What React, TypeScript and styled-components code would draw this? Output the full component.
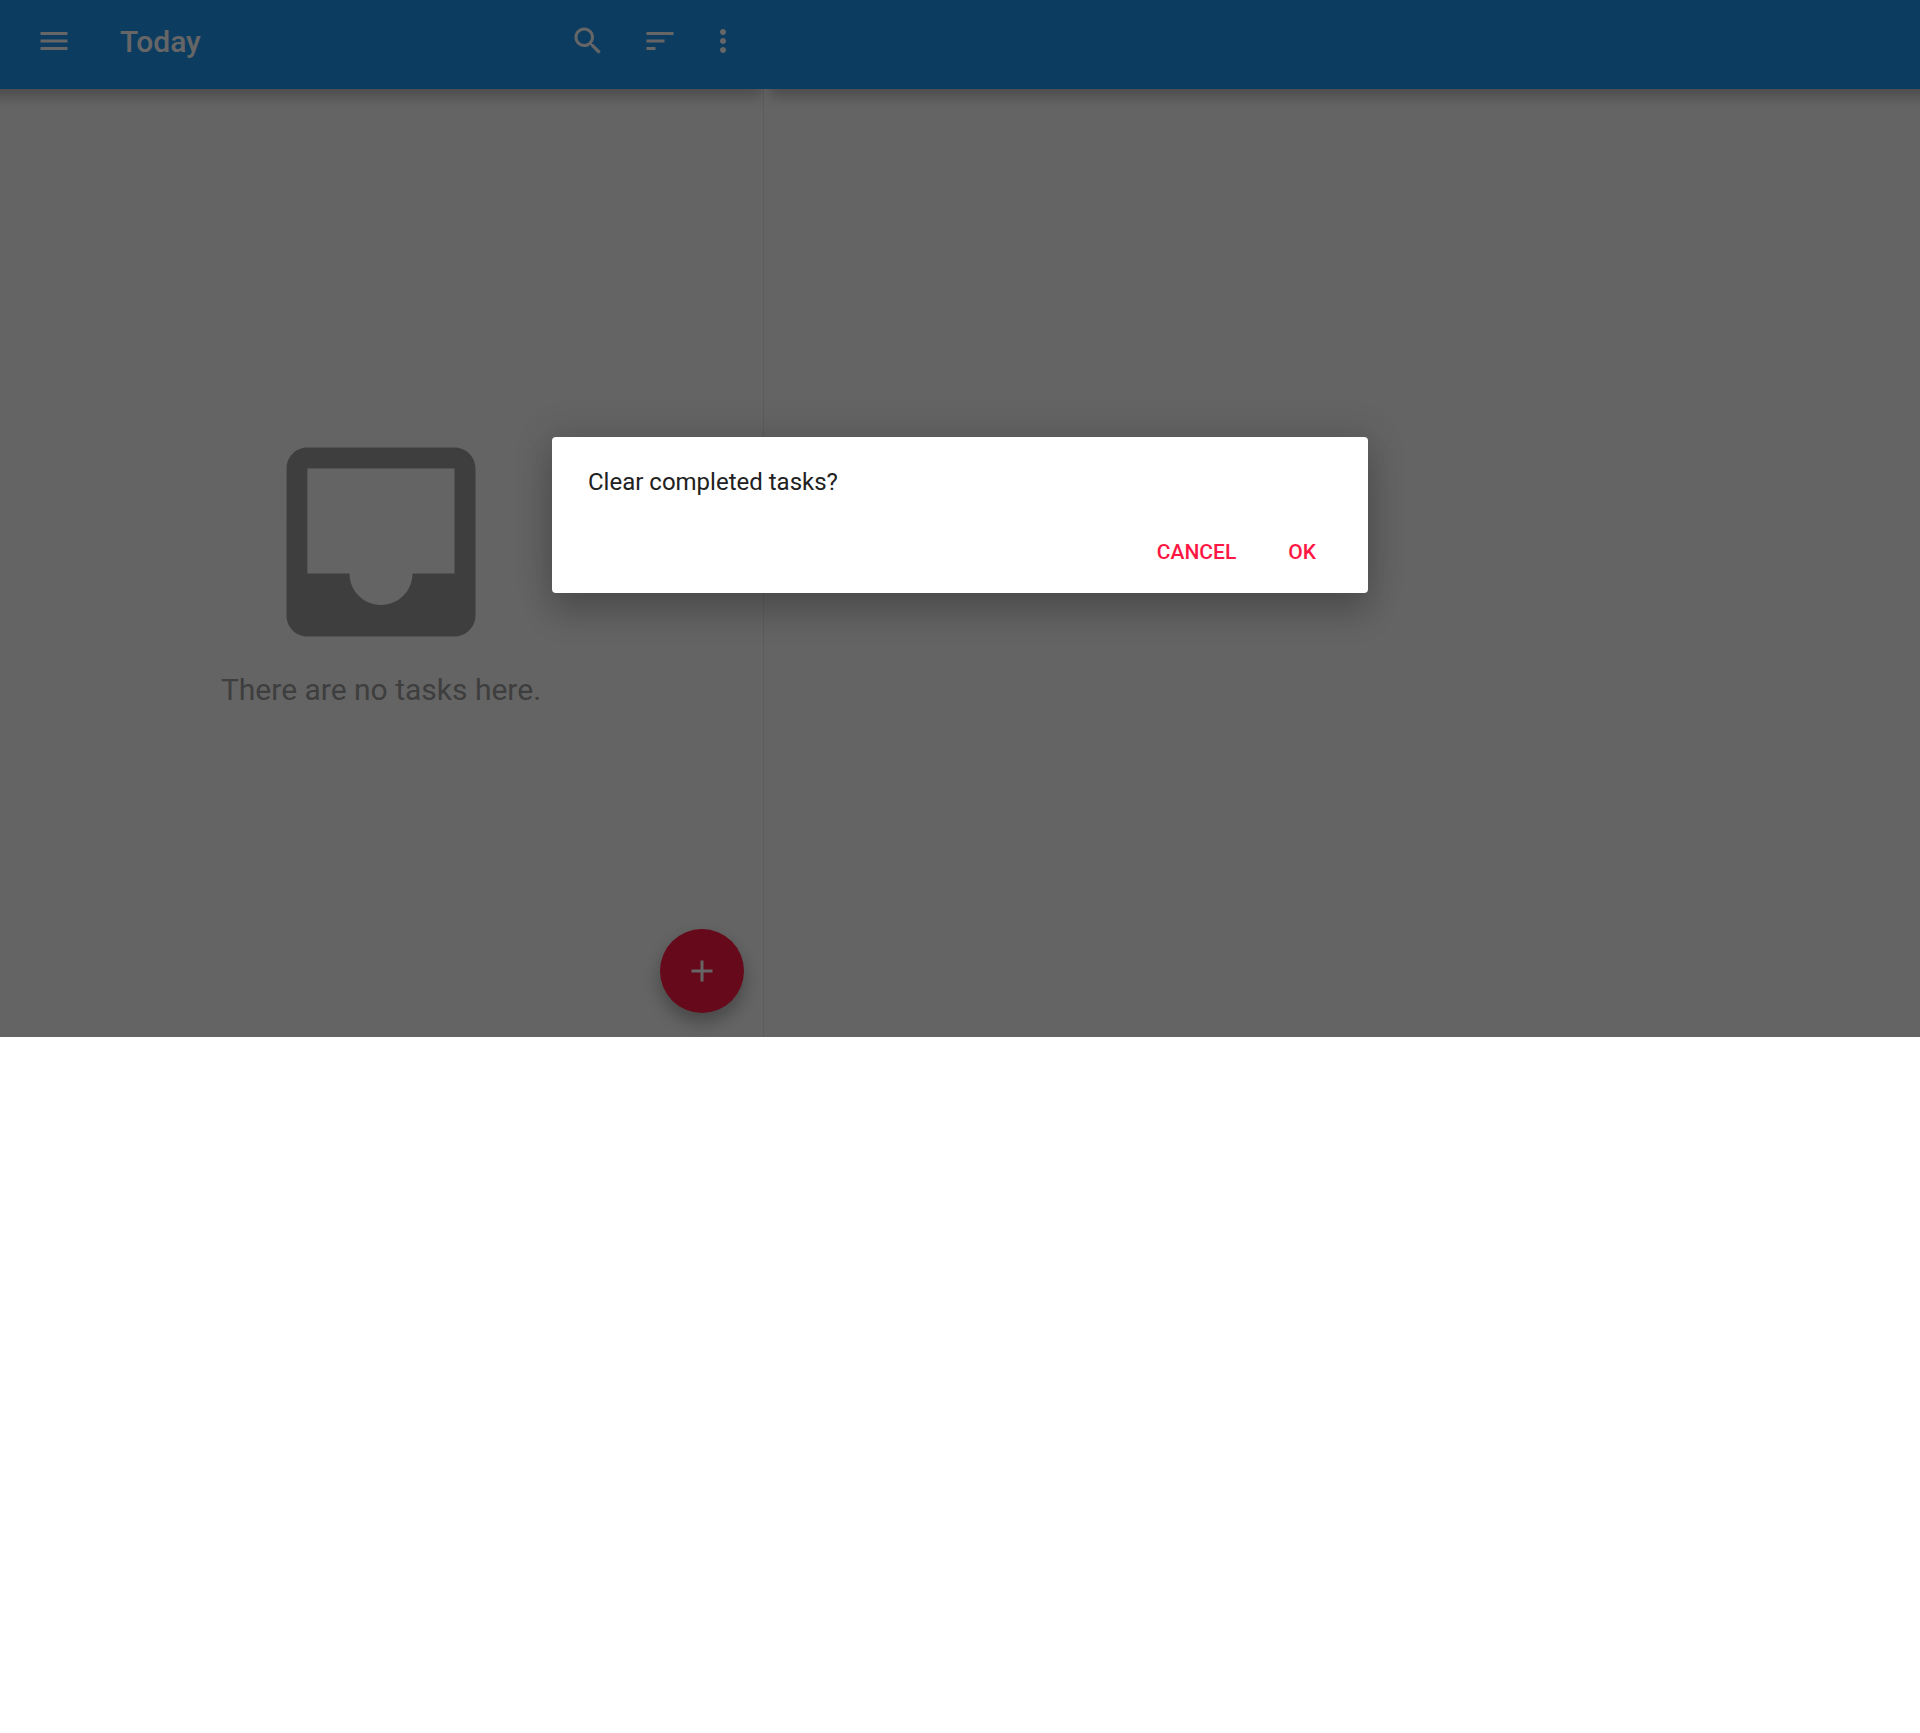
import React from "react";
import styled, { createGlobalStyle } from "styled-components";

const color = {
  primary: "#2196f3",
  accent: "#ff1744",
  surface: "#fafafa",
  muted: "#9b9b9b",
  text: "#212121",
  divider: "#e6e6e6",
};

const GlobalStyle = createGlobalStyle`
  * { box-sizing: border-box; }
  body {
    margin: 0;
    background: #ffffff;
    color: ${color.text};
    font-family: Roboto, "Noto Sans", sans-serif;
  }
`;

const Screen = styled.div`
  position: relative;
  display: grid;
  grid-template-columns: 764px 1fr;
  background: ${color.surface};
`;

const Pane = styled.section<{ $divided?: boolean }>`
  display: flex;
  flex-direction: column;
  position: relative;
  min-width: 0;
  border-right: ${(p) => (p.$divided ? `1px solid ${color.divider}` : "none")};
`;

/* The clip keeps each bar's shadow below it, so the two bars join without a seam. */
const Toolbar = styled.header<{ $side: "list" | "detail" }>`
  display: flex;
  align-items: center;
  height: 89px;
  padding: 0 14px 7px 18px;
  margin-right: ${(p) => (p.$side === "list" ? "-1px" : "0")};
  background: ${color.primary};
  color: #ffffff;
  box-shadow: ${(p) => (p.$side === "list" ? "-8px" : "12px")} 0 14px 7px rgba(0, 0, 0, 0.26);
  clip-path: inset(0 0 -24px 0);
`;

const Title = styled.h1`
  flex: 1;
  margin: 0;
  padding: 2px 0 0 30px;
  font-size: 30px;
  line-height: 36px;
  font-weight: 500;
`;

const IconButton = styled.button<{ $width?: number }>`
  display: flex;
  align-items: center;
  justify-content: center;
  width: ${(p) => p.$width ?? 72}px;
  height: 72px;
  padding: 0;
  border: 0;
  background: none;
  color: inherit;
`;

const Empty = styled.div`
  display: flex;
  flex-direction: column;
  align-items: center;
  padding: 327px 1px 327px 0;
  color: ${color.muted};
`;

const EmptyText = styled.p`
  margin: 0;
  padding-top: 2px;
  font-size: 30px;
  line-height: 40px;
`;

const Fab = styled.button`
  position: absolute;
  right: 19px;
  bottom: 24px;
  display: flex;
  align-items: center;
  justify-content: center;
  width: 84px;
  height: 84px;
  padding: 0;
  border: 0;
  border-radius: 50%;
  background: ${color.accent};
  color: #ffffff;
  box-shadow: 0 9px 18px rgba(0, 0, 0, 0.3);
`;

const Scrim = styled.div`
  position: absolute;
  inset: 0;
  display: flex;
  align-items: center;
  justify-content: center;
  padding-bottom: 7px;
  background: rgba(0, 0, 0, 0.6);
`;

const Dialog = styled.div`
  width: 816px;
  padding: 27px 40px 20px 36px;
  border-radius: 4px;
  background: #ffffff;
  box-shadow:
    0 22px 32px rgba(0, 0, 0, 0.16),
    0 0 36px 4px rgba(0, 0, 0, 0.14);
`;

const Message = styled.p`
  margin: 0;
  font-size: 24px;
  line-height: 36px;
`;

const Actions = styled.div`
  display: flex;
  justify-content: flex-end;
  gap: 28px;
  padding-top: 31px;
`;

const Action = styled.button`
  height: 42px;
  padding: 0 12px;
  border: 0;
  background: none;
  color: ${color.accent};
  font-family: inherit;
  font-size: 21px;
  line-height: 28px;
  font-weight: 500;
  text-transform: uppercase;
`;

const Svg = styled.svg`
  display: block;
  fill: currentColor;
`;

const paths = {
  menu: "M3 18h18v-2H3v2zm0-5h18v-2H3v2zm0-7v2h18V6H3z",
  search:
    "M15.5 14h-.79l-.28-.27C15.41 12.59 16 11.11 16 9.5 16 5.91 13.09 3 9.5 3S3 5.91 3 9.5 5.91 16 9.5 16c1.61 0 3.09-.59 4.23-1.57l.27.28v.79l5 4.99L20.49 19l-4.99-5zm-6 0C7.01 14 5 11.99 5 9.5S7.01 5 9.5 5 14 7.01 14 9.5 11.99 14 9.5 14z",
  sort: "M3 18h6v-2H3v2zM3 6v2h18V6H3zm0 7h12v-2H3v2z",
  more: "M12 8c1.1 0 2-.9 2-2s-.9-2-2-2-2 .9-2 2 .9 2 2 2zm0 2c-1.1 0-2 .9-2 2s.9 2 2 2 2-.9 2-2-.9-2-2-2zm0 6c-1.1 0-2 .9-2 2s.9 2 2 2 2-.9 2-2-.9-2-2-2z",
  add: "M19 13h-6v6h-2v-6H5v-2h6V5h2v6h6v2z",
  inbox:
    "M19 3H4.99c-1.11 0-1.98.89-1.98 2L3 19c0 1.1.88 2 1.99 2H19c1.1 0 2-.9 2-2V5c0-1.11-.9-2-2-2zm0 12h-4c0 1.66-1.35 3-3 3s-3-1.34-3-3H4.99V5H19v10z",
};

function Icon({ name, size = 36 }: { name: keyof typeof paths; size?: number }) {
  return (
    <Svg width={size} height={size} viewBox="0 0 24 24" aria-hidden="true">
      <path d={paths[name]} />
    </Svg>
  );
}

export default function App() {
  return (
    <>
      <GlobalStyle />
      <Screen>
        <Pane $divided>
          <Toolbar $side="list">
            <IconButton aria-label="Open menu">
              <Icon name="menu" />
            </IconButton>
            <Title>Today</Title>
            <IconButton aria-label="Search">
              <Icon name="search" />
            </IconButton>
            <IconButton aria-label="Sort">
              <Icon name="sort" />
            </IconButton>
            <IconButton aria-label="More options" $width={54}>
              <Icon name="more" />
            </IconButton>
          </Toolbar>
          <Empty>
            <Icon name="inbox" size={252} />
            <EmptyText>There are no tasks here.</EmptyText>
          </Empty>
          <Fab aria-label="Add task">
            <Icon name="add" />
          </Fab>
        </Pane>
        <Pane>
          <Toolbar $side="detail" />
        </Pane>
        <Scrim>
          <Dialog role="alertdialog" aria-modal="true" aria-labelledby="dialog-message">
            <Message id="dialog-message">Clear completed tasks?</Message>
            <Actions>
              <Action>Cancel</Action>
              <Action>OK</Action>
            </Actions>
          </Dialog>
        </Scrim>
      </Screen>
    </>
  );
}
